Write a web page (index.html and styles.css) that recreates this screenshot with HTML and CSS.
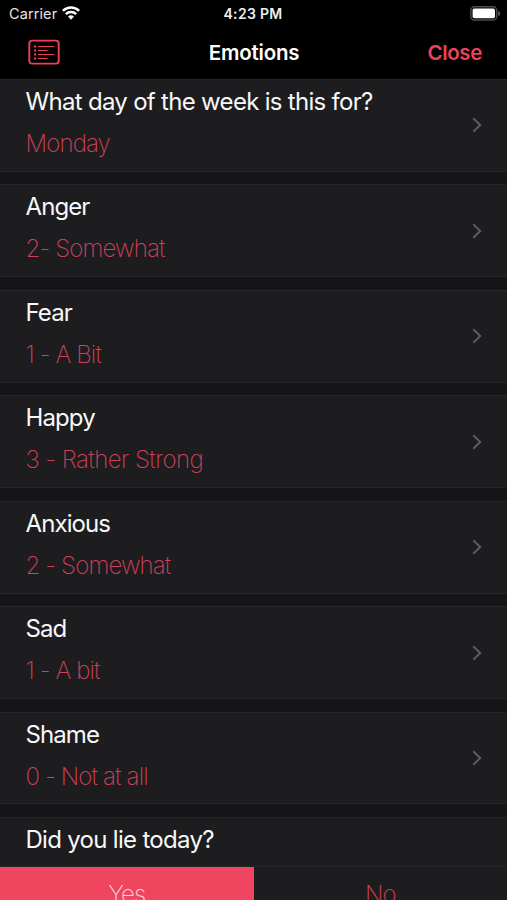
FILE: index.html
```html
<!DOCTYPE html>
<html lang="en">
<head>
<meta charset="utf-8">
<title>Emotions</title>
<link rel="stylesheet" href="styles.css">
</head>
<body>
<div class="screen">
  <header class="top">
    <div class="status">
      <div class="carrier"><span>Carrier</span>
        <svg class="wifi" width="18" height="14" viewBox="0 0 18 14" fill="none" stroke="#fff" stroke-width="2.4"><path d="M.9 4.9a11.5 11.5 0 0 1 16.2 0M3.8 8.200a7.4 7.4 0 0 1 10.4 0"/><path d="M9 13.7 6 10.6a4.3 4.3 0 0 1 6 0z" fill="#fff" stroke="none"/></svg>
      </div>
      <span class="time">4:23 PM</span>
      <svg class="battery" width="31" height="15" viewBox="0 0 31 15"><rect x=".8" y=".8" width="26" height="13.2" rx="3.8" fill="none" stroke="#4e4e50" stroke-width="1.4"/><rect x="2.6" y="2.6" width="22.4" height="9.600" rx="1.800" fill="#fff"/><path d="M28.4 5v5c2.2-.8 2.2-4.200 0-5z" fill="#6a6a6c"/></svg>
    </div>
    <nav class="nav">
      <svg class="list-icon" width="32" height="26" viewBox="0 0 32 26" fill="none" stroke="#e9435b"><rect x="1.300" y="1.600" width="29.400" height="23" rx="2.800" stroke-width="1.900"/><path d="M10 7.500h16.500M10 11.500h9.500M10 15.500h16.500M10 19.500h9.500" stroke-width="1.100"/><path d="M6 7.500h2.200M6 11.500h2.200M6 15.500h2.200M6 19.500h2.200" stroke-width="2"/></svg>
      <h1>Emotions</h1>
      <span class="close">Close</span>
    </nav>
  </header>
  <main class="list">
    <section class="card"><div><h2 class="question">What day of the week is this for?</h2><p>Monday</p></div><svg class="chevron" viewBox="0 0 10 16"><path d="m1.300 1.300 6.900 6.700-6.900 6.700"/></svg></section>
    <section class="card"><div><h2>Anger</h2><p>2- Somewhat</p></div><svg class="chevron" viewBox="0 0 10 16"><path d="m1.300 1.300 6.900 6.700-6.900 6.700"/></svg></section>
    <section class="card"><div><h2>Fear</h2><p>1 - A Bit</p></div><svg class="chevron" viewBox="0 0 10 16"><path d="m1.300 1.300 6.900 6.700-6.900 6.700"/></svg></section>
    <section class="card"><div><h2>Happy</h2><p class="long">3 - Rather Strong</p></div><svg class="chevron" viewBox="0 0 10 16"><path d="m1.300 1.300 6.900 6.700-6.900 6.700"/></svg></section>
    <section class="card"><div><h2>Anxious</h2><p>2 - Somewhat</p></div><svg class="chevron" viewBox="0 0 10 16"><path d="m1.300 1.300 6.900 6.700-6.900 6.700"/></svg></section>
    <section class="card"><div><h2>Sad</h2><p>1 - A bit</p></div><svg class="chevron" viewBox="0 0 10 16"><path d="m1.300 1.300 6.900 6.700-6.900 6.700"/></svg></section>
    <section class="card"><div><h2>Shame</h2><p>0 - Not at all</p></div><svg class="chevron" viewBox="0 0 10 16"><path d="m1.300 1.300 6.900 6.700-6.900 6.700"/></svg></section>
    <section class="card choice"><h2 class="question">Did you lie today?</h2>
      <div class="options"><span class="option selected">Yes</span><span class="option">No</span></div>
    </section>
  </main>
</div>
</body>
</html>
```
FILE: styles.css
```css
* { box-sizing: border-box; margin: 0; padding: 0; }
body { background: #151517; font-family: Inter, "Liberation Sans", sans-serif; color: #fff; }
.screen { width: 507px; height: 900px; overflow: hidden; display: flex; flex-direction: column; }
.top { height: 79px; flex: none; background: #000; }
.status { height: 27px; display: grid; grid-template-columns: 1fr auto 1fr; align-items: center; padding: 0 7px 0 9px; font-size: 14.5px; }
.carrier { display: flex; align-items: center; gap: 5px; color: #e4e4e4; letter-spacing: .1px; }
.wifi { margin-top: -2px; }
.time { font-weight: 600; font-size: 14px; letter-spacing: .3px; margin-left: -3px; color: #eee; }
.battery { justify-self: end; margin-right: -1px; margin-top: -1px; }
.nav { height: 50px; display: grid; grid-template-columns: 1fr auto 1fr; align-items: center; padding: 0 25px 0 28px; }
.nav h1 { font-size: 20.500px; font-weight: 600; letter-spacing: -.2px; margin-left: -2px; }
.close { justify-self: end; color: #e9435b; font-size: 20.500px; font-weight: 600; letter-spacing: -.35px; }
.list { display: flex; flex-direction: column; gap: 12.500px; flex: none; }
.card { height: 92.930px; background: #1d1d1f; border-top: 1px solid #262628; border-bottom: 1px solid #262628; padding: 1px 25px 0 25.500px; display: flex; align-items: center; justify-content: space-between; }
.card h2 { font-size: 24px; line-height: 42px; font-weight: 400; letter-spacing: -.9px; color: #f8f8f8; }
.card h2.question { letter-spacing: -.7px; }
.card p { font-size: 24px; line-height: 42px; font-weight: 200; letter-spacing: -.85px; color: #d04059; }
.card p.long { letter-spacing: -.55px; }
.card > div:first-child { align-self: flex-start; }
.chevron { width: 10px; height: 16px; margin-top: -1px; fill: none; stroke: #5c5c60; stroke-width: 2; }
.choice { display: block; padding: 1px 0 0; height: 120px; }
.choice h2 { padding-left: 25.500px; height: 48px; border-bottom: 1px solid #262628; }
.options { display: grid; grid-template-columns: 1fr 1fr; }
.option { height: 70px; font-size: 24px; line-height: 56px; font-weight: 200; text-align: center; letter-spacing: -.85px; color: #d04059; }
.selected { background: #f0455e; color: #fbd5da; }
```
